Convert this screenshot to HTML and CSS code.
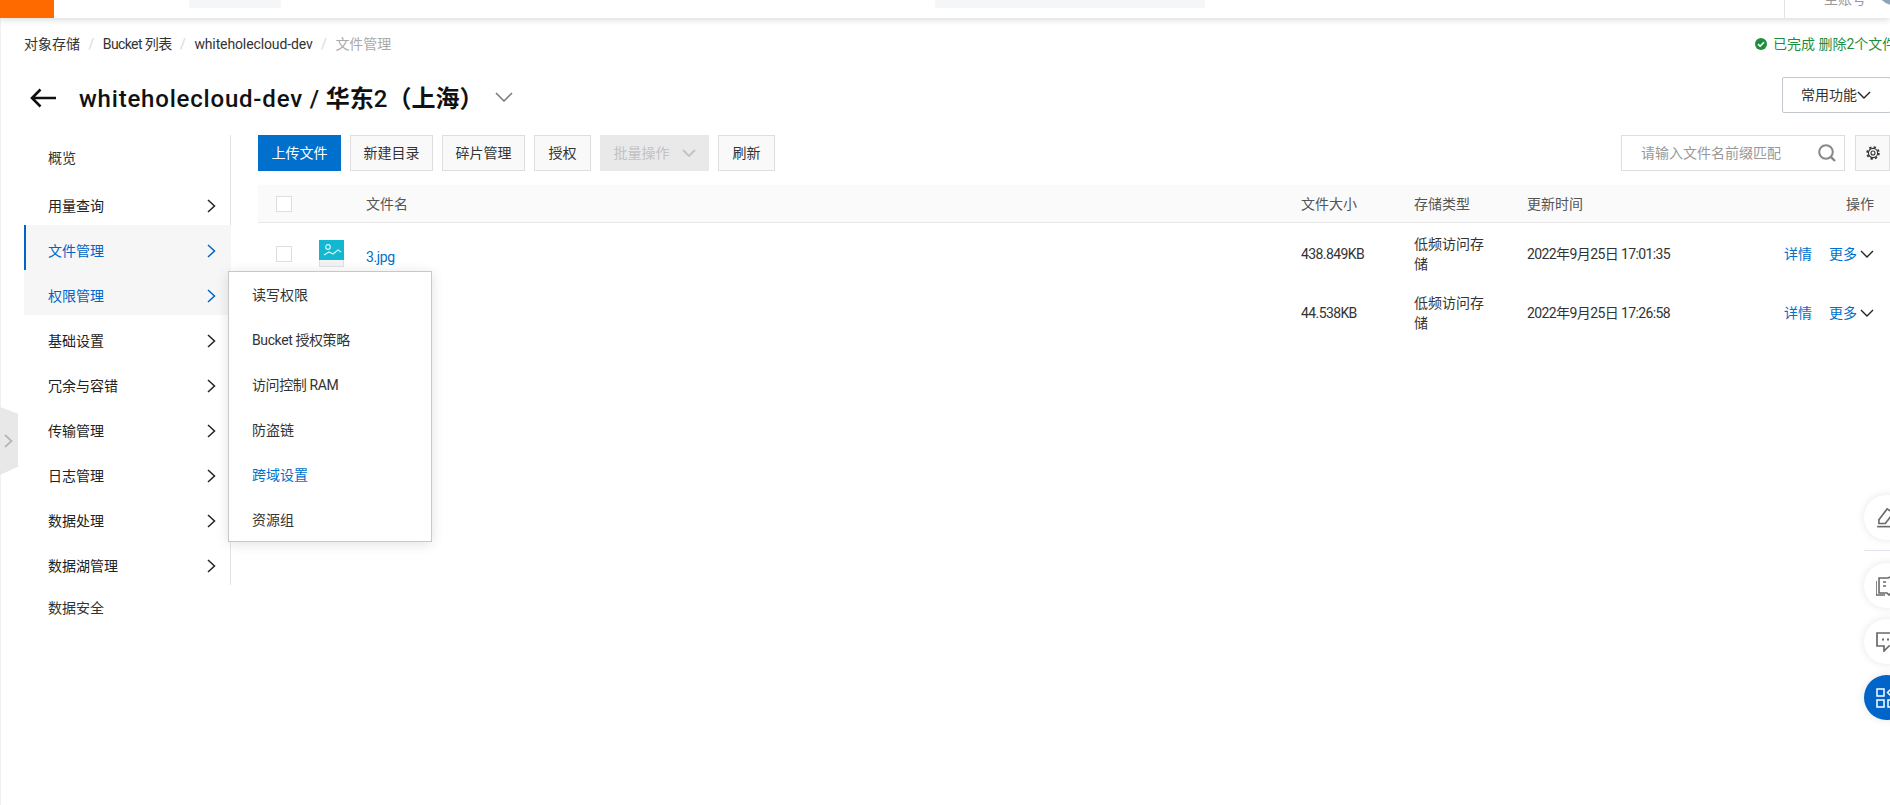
FILE: index.html
```html
<!DOCTYPE html>
<html lang="zh-CN">
<head>
<meta charset="utf-8">
<title>文件管理</title>
<link rel="stylesheet" href="styles.css">
</head>
<body>
<header class="topbar">
  <div class="logo"></div>
  <div class="tb-block tb-block-a"></div>
  <div class="tb-block tb-block-b"></div>
  <div class="tb-account">
    <span class="tb-name">主账号</span>
    <span class="tb-avatar"></span>
  </div>
</header>

<div class="page">
  <div class="crumb-row">
    <nav class="crumbs">
      <a>对象存储</a><i>/</i><a class="tight">Bucket 列表</a><i>/</i><a class="slim">whiteholecloud-dev</a><i>/</i><span>文件管理</span>
    </nav>
    <div class="status">
      <svg class="status-ico" viewBox="0 0 12 12"><circle cx="6" cy="6" r="6" fill="#1e8e3e"/><path d="M3 6.200l2.100 2L9 4.300" fill="none" stroke="#fff" stroke-width="1.600"/></svg>
      <span>已完成 删除2个文件</span>
    </div>
  </div>

  <div class="title-row">
    <svg class="back" viewBox="0 0 26 20"><path d="M26 10H2M10.500 1.500L2 10l8.500 8.500" fill="none" stroke="#111" stroke-width="2.600"/></svg>
    <h1 class="title"><span class="title-lat">whiteholecloud-dev /</span> <b>华东</b>2<b>（上海）</b></h1>
    <svg class="title-chev" viewBox="0 0 18 10"><path d="M1 1l8 8 8-8" fill="none" stroke="#777" stroke-width="1.500"/></svg>
    <button class="common-btn">常用功能<svg class="chev-d" viewBox="0 0 14 8"><path d="M1 1l6 6 6-6" fill="none" stroke="#222" stroke-width="1.400"/></svg></button>
  </div>

  <div class="workspace">
    <aside class="side">
      <a class="nav leaf">概览</a>
      <a class="nav"><span>用量查询</span><svg class="chev-r" viewBox="0 0 9 14"><path d="M1 1l6.500 6L1 13" fill="none" stroke="currentColor" stroke-width="1.500"/></svg></a>
      <a class="nav active bar"><span>文件管理</span><svg class="chev-r" viewBox="0 0 9 14"><path d="M1 1l6.500 6L1 13" fill="none" stroke="currentColor" stroke-width="1.500"/></svg></a>
      <a class="nav active"><span>权限管理</span><svg class="chev-r" viewBox="0 0 9 14"><path d="M1 1l6.500 6L1 13" fill="none" stroke="currentColor" stroke-width="1.500"/></svg></a>
      <a class="nav"><span>基础设置</span><svg class="chev-r" viewBox="0 0 9 14"><path d="M1 1l6.500 6L1 13" fill="none" stroke="currentColor" stroke-width="1.500"/></svg></a>
      <a class="nav"><span>冗余与容错</span><svg class="chev-r" viewBox="0 0 9 14"><path d="M1 1l6.500 6L1 13" fill="none" stroke="currentColor" stroke-width="1.500"/></svg></a>
      <a class="nav"><span>传输管理</span><svg class="chev-r" viewBox="0 0 9 14"><path d="M1 1l6.500 6L1 13" fill="none" stroke="currentColor" stroke-width="1.500"/></svg></a>
      <a class="nav"><span>日志管理</span><svg class="chev-r" viewBox="0 0 9 14"><path d="M1 1l6.500 6L1 13" fill="none" stroke="currentColor" stroke-width="1.500"/></svg></a>
      <a class="nav"><span>数据处理</span><svg class="chev-r" viewBox="0 0 9 14"><path d="M1 1l6.500 6L1 13" fill="none" stroke="currentColor" stroke-width="1.500"/></svg></a>
      <a class="nav"><span>数据湖管理</span><svg class="chev-r" viewBox="0 0 9 14"><path d="M1 1l6.500 6L1 13" fill="none" stroke="currentColor" stroke-width="1.500"/></svg></a>
      <a class="nav leaf">数据安全</a>

      <div class="popup">
        <a>读写权限</a>
        <a class="lat">Bucket 授权策略</a>
        <a class="lat">访问控制 RAM</a>
        <a>防盗链</a>
        <a class="on">跨域设置</a>
        <a>资源组</a>
      </div>
    </aside>

    <main class="content">
      <div class="toolbar">
        <button class="btn primary">上传文件</button>
        <button class="btn">新建目录</button>
        <button class="btn">碎片管理</button>
        <button class="btn short">授权</button>
        <button class="btn disabled">批量操作<svg class="chev-dis" viewBox="0 0 14 8"><path d="M1 1l6 6 6-6" fill="none" stroke="#c4c4c4" stroke-width="2"/></svg></button>
        <button class="btn short">刷新</button>
        <div class="search">
          <span class="placeholder">请输入文件名前缀匹配</span>
          <svg class="search-ico" viewBox="0 0 18 18"><circle cx="8" cy="8" r="6.800" fill="none" stroke="#888" stroke-width="2"/><path d="M12.800 12.800L17 17" stroke="#888" stroke-width="2.400"/></svg>
        </div>
        <button class="btn gear">
          <svg class="gear-ico" viewBox="0 0 14 14"><circle cx="7" cy="7" r="4.600" fill="none" stroke="#333" stroke-width="1.100"/><circle cx="7" cy="7" r="5.900" fill="none" stroke="#333" stroke-width="1.700" stroke-dasharray="2.320 2.312"/><circle cx="7" cy="7" r="2" fill="none" stroke="#333" stroke-width="1.100"/></svg>
        </button>
      </div>

      <div class="table">
        <div class="row head">
          <span class="check"></span>
          <span></span>
          <span>文件名</span>
          <span>文件大小</span>
          <span>存储类型</span>
          <span>更新时间</span>
          <span class="ops-head">操作</span>
        </div>
        <div class="row">
          <span class="check"></span>
          <svg class="thumb" viewBox="0 0 25 27"><rect width="25" height="27" fill="#e0e0e0"/><rect x="1" y="20" width="23" height="6" fill="#f2f2f2"/><rect width="25" height="20" fill="#12b7d2"/><circle cx="9" cy="7" r="2.300" fill="none" stroke="#d8f3f7" stroke-width="1.200"/><path d="M5 15l5-3 4 2 5-4 3 2" fill="none" stroke="#d8f3f7" stroke-width="1.200"/></svg>
          <a class="link name">3.jpg</a>
          <span class="num">438.849KB</span>
          <span class="type">低频访问存储</span>
          <span class="num">2022年9月25日 17:01:35</span>
          <span class="ops"><a class="link">详情</a><a class="link">更多</a><svg class="chev-d" viewBox="0 0 14 8"><path d="M1 1l6 6 6-6" fill="none" stroke="#222" stroke-width="1.400"/></svg></span>
        </div>
        <div class="row">
          <span class="check"></span>
          <span></span>
          <span></span>
          <span class="num">44.538KB</span>
          <span class="type">低频访问存储</span>
          <span class="num">2022年9月25日 17:26:58</span>
          <span class="ops"><a class="link">详情</a><a class="link">更多</a><svg class="chev-d" viewBox="0 0 14 8"><path d="M1 1l6 6 6-6" fill="none" stroke="#222" stroke-width="1.400"/></svg></span>
        </div>
      </div>
    </main>
  </div>
</div>

<div class="handle"><svg class="handle-ico" viewBox="0 0 9 14"><path d="M1 1l6.500 6L1 13" fill="none" stroke="#b4b8bd" stroke-width="1.800"/></svg></div>

<div class="float">
  <div class="fab">
    <svg class="fab-ico" viewBox="0 0 24 22"><path d="M2 17v-4L11 1l7 4.500L9 17z" fill="none" stroke="#6a6a6a" stroke-width="1.800"/><path d="M0 20.500h24" stroke="#6a6a6a" stroke-width="1.800"/></svg>
  </div>
  <div class="fab-line"></div>
  <div class="fab">
    <svg class="fab-ico" viewBox="0 0 24 20"><path d="M3 2v15h8l2 2 2-2h7V1h-8l-2 1z" fill="none" stroke="#6a6a6a" stroke-width="1.600"/><path d="M0 5v14h9" fill="none" stroke="#6a6a6a" stroke-width="1.600"/><path d="M7 6h3M7 10h3M16 6h3" stroke="#6a6a6a" stroke-width="1.400"/></svg>
  </div>
  <div class="fab">
    <svg class="fab-ico" viewBox="0 0 24 20"><path d="M1 1h22v13H13l-5 5v-5H1z" fill="none" stroke="#6a6a6a" stroke-width="1.700"/><path d="M6 7.500h2M11 7.500h2M16 7.500h2" stroke="#6a6a6a" stroke-width="1.800"/></svg>
  </div>
  <div class="fab fab-blue">
    <svg class="fab-ico" viewBox="0 0 24 20"><path d="M1 1h7v7H1zM1 12h7v7H1zM12 12h7v7h-7zM15.500.5l4 4-4 4-4-4z" fill="none" stroke="#fff" stroke-width="1.500"/></svg>
  </div>
</div>
</body>
</html>
```

FILE: styles.css
```css
* { box-sizing: border-box; }
html, body { margin: 0; padding: 0; }
body {
  width: 1890px;
  height: 805px;
  overflow: hidden;
  position: relative;
  background: #fff;
  color: #333;
  font: 14px/20px Roboto, "Noto Sans CJK SC", sans-serif;
}
a { color: inherit; text-decoration: none; }
button { font: inherit; color: inherit; }
svg { display: block; flex: none; }

.topbar {
  height: 18px;
  display: flex;
  background: #fff;
  box-shadow: 0 2px 6px rgba(0, 0, 0, .14);
  position: relative;
  z-index: 2;
  clip-path: inset(0 0 -12px 0);
}
.logo { width: 54px; height: 18px; background: #ff6a00; flex: none; }
.tb-block { height: 8px; background: #f5f6f7; border-radius: 0 0 2px 2px; flex: none; }
.tb-block-a { width: 92px; margin-left: 135px; }
.tb-block-b { width: 270px; margin-left: 654px; }
.tb-account {
  margin-left: 579px;
  flex: 1;
  height: 18px;
  border-left: 1px solid #e3e3e3;
  display: flex;
  padding-left: 39px;
  overflow: hidden;
}
.tb-name { margin-top: -11px; color: #999; line-height: 20px; white-space: nowrap; }
.tb-avatar {
  width: 30px;
  height: 30px;
  margin: -25px 0 0 12px;
  border-radius: 50%;
  background: #8ea3b6;
  flex: none;
}

.page { border-left: 1px solid #f0f0f0; padding-left: 23px; height: 787px; }

.crumb-row {
  height: 52px;
  display: flex;
  align-items: center;
  justify-content: space-between;
  white-space: nowrap;
}
.crumbs { display: flex; align-items: center; color: #333; }
.crumbs i { font-style: normal; color: #d8d8dc; margin: 0 8.500px; }
.crumbs span { color: #aaa; }
.crumbs .tight { letter-spacing: -.6px; }
.crumbs .slim { letter-spacing: -.12px; }
.status { display: flex; align-items: center; gap: 6px; color: #1e8e3e; width: 135px; overflow: hidden; flex: none; }
.status-ico { width: 12px; height: 12px; }

.title-row {
  display: flex;
  align-items: center;
  height: 36px;
  margin-top: 7px;
  margin-bottom: 22px;
  white-space: nowrap;
}
.back { width: 26px; height: 20px; margin: 6px 0 0 6px; }
.title { margin: 7px 0 0 23px; font-size: 24px; line-height: 36px; font-weight: 500; color: #111; }
.title-lat { letter-spacing: .8px; }
.title b { font-weight: 700; }
.title-chev { width: 18px; height: 10px; margin: 4px 0 0 12px; }
.common-btn {
  margin-left: auto;
  width: 109px;
  height: 36px;
  flex: none;
  margin-right: -1px;
  background: #fff;
  border: 1px solid #c0c6cc;
  border-radius: 2px;
  padding: 0 0 0 18px;
  display: flex;
  align-items: center;
}
.common-btn .chev-d { margin-left: 0; }

.workspace { display: flex; }
.side {
  width: 207px;
  height: 450px;
  border-right: 1px solid #e3e3e3;
  position: relative;
  flex: none;
}
.nav {
  height: 45px;
  padding: 6px 14px 0 24px;
  display: flex;
  align-items: center;
  justify-content: space-between;
  color: #222;
}
.nav.leaf { padding-top: 0; color: #333; }
.nav.active { background: #f6f6f6; color: #0064c8; margin-right: -1px; padding-right: 15px; }
.nav.bar { box-shadow: inset 2px 0 0 #0064c8; }
.chev-r { width: 9px; height: 14px; margin-top: 1px; }

.popup {
  position: absolute;
  left: 204px;
  top: 136px;
  width: 204px;
  height: 271px;
  background: #fff;
  border: 1px solid #c8c8c8;
  box-shadow: 0 2px 12px rgba(0, 0, 0, .12);
  z-index: 3;
}
.popup a { display: flex; align-items: center; height: 45px; padding-left: 23px; }
.popup a.lat { letter-spacing: -.4px; }
.popup a.on { color: #0070cc; }

.content { margin-left: 27px; flex: 1; min-width: 0; }
.toolbar { display: flex; gap: 9px; height: 36px; margin-bottom: 14px; white-space: nowrap; }
.btn {
  height: 36px;
  padding: 0 12.500px;
  background: #f9f9f9;
  border: 1px solid #dedede;
  flex: none;
  display: flex;
  align-items: center;
  color: #333;
}
.btn.short { padding: 0 13.500px; }
.btn.primary { background: #0070cc; border-color: #0070cc; color: #fff; }
.btn.disabled { background: #e9e9e9; border-color: #e9e9e9; color: #c2c2c2; gap: 12px; }
.chev-dis { width: 14px; height: 8px; }
.search {
  margin-left: auto;
  width: 224px;
  height: 36px;
  border: 1px solid #dedede;
  display: flex;
  align-items: center;
  justify-content: space-between;
  padding: 0 8px 0 19px;
  color: #999;
}
.search-ico { width: 18px; height: 18px; }
.btn.gear { width: 35px; padding: 0 0 0 10px; margin-left: 1px; }
.gear-ico { width: 14px; height: 14px; }

.row {
  display: grid;
  grid-template-columns: 61px 47px 935px 113px 113px 1fr 127px;
  align-items: center;
  height: 59.500px;
}
.row.head { height: 38px; margin-bottom: 1px; background: #fafafa; border-bottom: 1px solid #e8e8e8; color: #555; }
.check {
  display: block;
  width: 16px;
  height: 16px;
  margin-left: 18px;
  border: 1px solid #dedede;
  background: #fff;
}
.thumb { width: 25px; height: 27px; }
.name { margin-top: 6px; letter-spacing: -.4px; }
.link { color: #0070cc; }
.num { letter-spacing: -.6px; }
.type { width: 80px; line-height: 20px; }
.ops-head { text-align: right; padding-right: 16px; }
.ops { display: flex; align-items: center; width: 127px; padding-left: 21px; }
.ops .link:first-child { margin-right: 17px; }
.chev-d { width: 14px; height: 8px; margin-left: 3px; }

.handle {
  position: absolute;
  left: 0;
  top: 407px;
  width: 18px;
  height: 68px;
  background: #e8e8e8;
  clip-path: polygon(0 0, 100% 10%, 100% 88%, 0 100%);
  display: flex;
  align-items: center;
  padding-left: 4px;
}
.handle-ico { width: 9px; height: 14px; }

.float {
  position: absolute;
  left: 1864px;
  top: 495px;
  width: 45px;
  display: flex;
  flex-direction: column;
}
.fab {
  width: 45px;
  height: 45px;
  border-radius: 50%;
  background: #fff;
  box-shadow: 0 0 8px rgba(0, 0, 0, .1);
  display: flex;
  align-items: center;
  padding-left: 12px;
  margin-bottom: 11px;
  flex: none;
}
.fab:first-child { margin-bottom: 10px; }
.fab-blue { background: #0064c8; margin-bottom: 0; }
.fab-ico { width: 24px; height: 20px; }
.fab-line { height: 1px; background: #e2e5ee; margin-bottom: 12px; }
```
